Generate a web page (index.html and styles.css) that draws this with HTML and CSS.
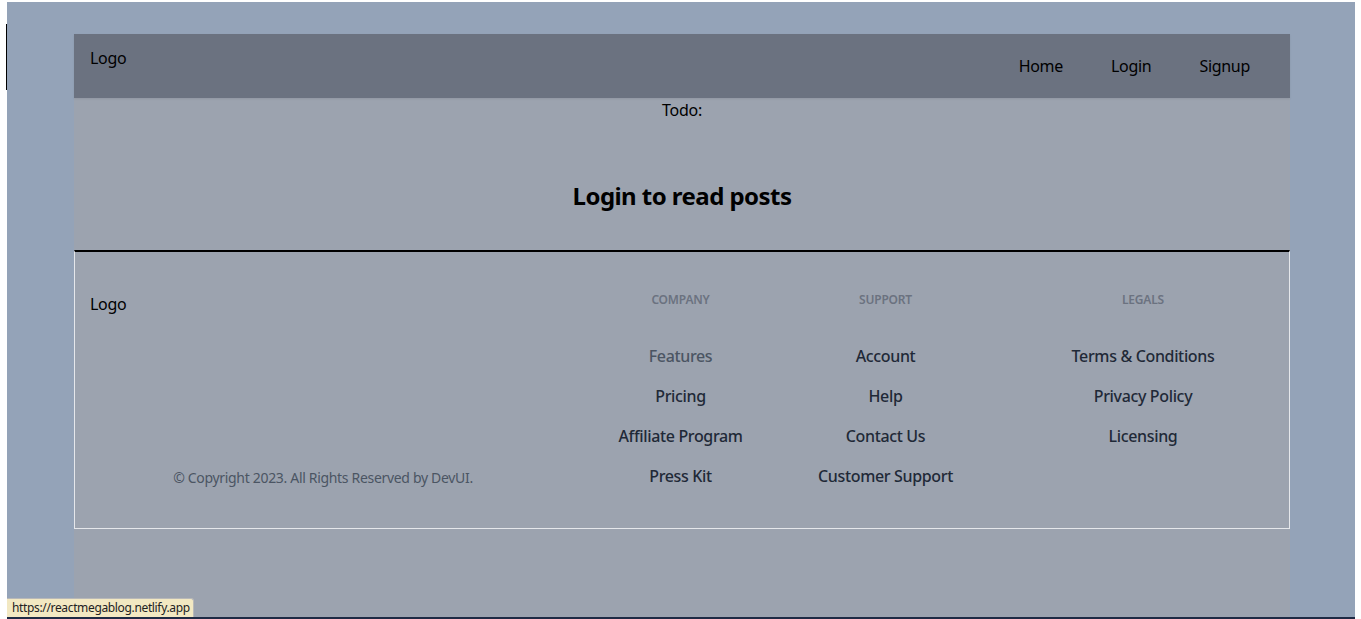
FILE: index.html
```html
<!DOCTYPE html>
<html lang="en">
<head>
<meta charset="utf-8">
<title>React Mega Blog</title>
<link rel="stylesheet" href="styles.css">
</head>
<body>
<div class="edge-mark"></div>
<div class="frame">
  <div class="container">
    <header class="header">
      <div class="logo">Logo</div>
      <nav class="nav">
        <a class="nav-item" href="#">Home</a>
        <a class="nav-item" href="#">Login</a>
        <a class="nav-item" href="#">Signup</a>
      </nav>
    </header>
    <div class="todo">Todo:</div>
    <h1 class="title">Login to read posts</h1>
    <footer class="footer">
      <div class="footer-brand">
        <div class="logo">Logo</div>
        <p class="copyright">© Copyright 2023. All Rights Reserved by DevUI.</p>
      </div>
      <div class="footer-col col-company">
        <h3 class="col-heading">Company</h3>
        <ul class="links">
          <li><a class="link link-muted" href="#">Features</a></li>
          <li><a class="link" href="#">Pricing</a></li>
          <li><a class="link" href="#">Affiliate Program</a></li>
          <li><a class="link" href="#">Press Kit</a></li>
        </ul>
      </div>
      <div class="footer-col col-support">
        <h3 class="col-heading">Support</h3>
        <ul class="links">
          <li><a class="link" href="#">Account</a></li>
          <li><a class="link" href="#">Help</a></li>
          <li><a class="link" href="#">Contact Us</a></li>
          <li><a class="link" href="#">Customer Support</a></li>
        </ul>
      </div>
      <div class="footer-col col-legals">
        <h3 class="col-heading">Legals</h3>
        <ul class="links">
          <li><a class="link" href="#">Terms &amp; Conditions</a></li>
          <li><a class="link" href="#">Privacy Policy</a></li>
          <li><a class="link" href="#">Licensing</a></li>
        </ul>
      </div>
    </footer>
  </div>
  <div class="status-tip">https://reactmegablog.netlify.app</div>
</div>
</body>
</html>
```

FILE: styles.css
```css
* { box-sizing: border-box; }

body {
  margin: 0;
  background: #ffffff;
  font-family: "Noto Sans", "Open Sans", sans-serif;
  letter-spacing: -0.3px;
  color: #000;
  position: relative;
}

.edge-mark {
  position: absolute;
  left: 6px;
  top: 24px;
  width: 1px;
  height: 66px;
  background: #000;
}

.frame {
  position: relative;
  margin: 2px 6px 0 7px;
  height: 617px;
  padding-top: 32px;
  background: #94a3b8;
  border-bottom: 2px solid #1e2a44;
  overflow: hidden;
}

.container {
  margin-left: 67px;
  width: 1216px;
  height: 100%;
  background: #9ca3af;
}

.header {
  height: 64px;
  background: #6b7280;
  display: flex;
  justify-content: space-between;
  align-items: flex-start;
  padding: 0 16px;
  box-shadow: 0 1px 2px rgba(0, 0, 0, 0.08);
}

.logo {
  font-size: 16px;
  line-height: 24px;
}

.header .logo { padding-top: 12px; }

.nav {
  display: flex;
  padding-top: 20px;
}

.nav-item {
  padding: 0 24px;
  font-size: 16px;
  line-height: 24px;
  color: #000;
  text-decoration: none;
}

.todo {
  text-align: center;
  font-size: 16px;
  line-height: 24px;
}

.title {
  margin: 58px 0 38px;
  text-align: center;
  font-size: 24px;
  line-height: 32px;
  font-weight: 700;
  letter-spacing: -0.55px;
}

.footer {
  display: flex;
  border: 1px solid #e5e7eb;
  border-top: 2px solid #000;
  padding: 40px 16px 40px 15px;
}

.footer-brand {
  width: 466px;
  display: flex;
  flex-direction: column;
  justify-content: space-between;
}

.copyright {
  margin: 0;
  text-align: center;
  font-size: 14px;
  line-height: 20px;
  color: #4b5563;
  letter-spacing: -0.32px;
}

.footer-col {
  text-align: center;
}

.col-company { margin-left: 22px; width: 205px; }
.col-support { width: 205px; }
.col-legals { margin-left: 32px; width: 246px; }

.col-heading {
  margin: 0 0 36px;
  font-size: 12px;
  line-height: 16px;
  font-weight: 600;
  text-transform: uppercase;
  color: #6b7280;
  letter-spacing: -0.2px;
}

.links {
  list-style: none;
  margin: 0;
  padding: 0;
  display: flex;
  flex-direction: column;
  gap: 16px;
}

.link {
  font-size: 16px;
  line-height: 24px;
  font-weight: 500;
  color: #1f2937;
  text-decoration: none;
  letter-spacing: -0.35px;
}

.link-muted { color: #4b5563; }

.status-tip {
  position: absolute;
  left: 0;
  bottom: 0;
  width: 187px;
  height: 19px;
  padding: 0 5px;
  font-size: 12px;
  line-height: 18px;
  letter-spacing: -0.35px;
  color: #222;
  background: #f2e8c2;
  border: 1px solid #b8b8b8;
  border-left: none;
  border-bottom: none;
  border-top-right-radius: 3px;
  white-space: nowrap;
  overflow: hidden;
}
```
